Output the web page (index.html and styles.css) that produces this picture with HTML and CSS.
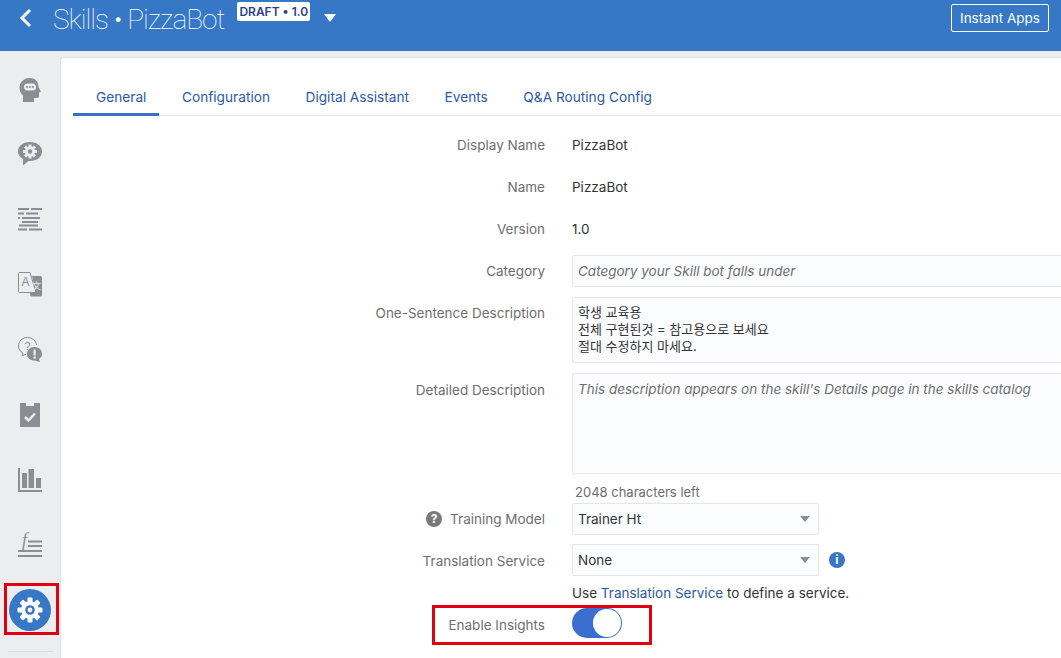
FILE: index.html
```html
<!DOCTYPE html>
<html>
<head>
<meta http-equiv="Content-Type" content="text/html; charset=UTF-8" />
<title>Skills - PizzaBot</title>
<link rel="stylesheet" href="styles.css">
</head>

<body>

<div id="header">
	<svg class="back-icon" width="14" height="20" viewBox="0 0 14 20"><path d="M11 2 L3 10 L11 18" fill="none" stroke="#fff" stroke-width="3"/></svg>
	<div id="title">Skills • PizzaBot</div>
	<div id="badge">DRAFT • 1.0</div>
	<div id="title-caret"></div>
	<button id="instant-apps">Instant Apps</button>
</div>

<div id="content">
	<div id="sidebar">
		<!-- head -->
		<div class="nav-item">
			<svg width="24" height="26" viewBox="0 0 24 26"><path class="ico" d="M12 1 C5.500 1 1.500 5.500 1.500 11 c0 3.500 1.500 5.500 3.500 7.500 V25 H16 v-4 h3 c1.500 0 2-1 2-2 v-3.500 l2-.8 L20.500 10 C20.500 5 17.500 1 12 1z"/><rect x="6" y="6.500" width="12" height="7" rx="3.500" fill="#ebedef"/><circle cx="9" cy="10" r="1" class="ico"/><circle cx="12" cy="10" r="1" class="ico"/><circle cx="15" cy="10" r="1" class="ico"/></svg>
		</div>
		<!-- bubble with gear -->
		<div class="nav-item nav-item-up">
			<svg width="24" height="24" viewBox="0 0 24 24"><path class="ico" d="M12 0 C5 0 0 4 0 9.500 C0 13 2.500 15.500 5 17 V23.500 L10.500 19 C18 19.500 24 15.500 24 9.500 C24 4 19 0 12 0z"/><g transform="translate(12 9.500)" fill="#ebedef"><circle r="5"/><rect x="-1.500" y="-7" width="3" height="14"/><rect x="-1.500" y="-7" width="3" height="14" transform="rotate(45)"/><rect x="-1.500" y="-7" width="3" height="14" transform="rotate(90)"/><rect x="-1.500" y="-7" width="3" height="14" transform="rotate(135)"/><circle r="2.200" class="ico"/></g></svg>
		</div>
		<!-- text lines -->
		<div class="nav-item">
			<svg width="24" height="23" viewBox="0 0 24 23"><g class="ico"><rect x="0" y="0" width="11" height="2"/><rect x="13" y="0" width="11" height="2"/><rect x="0" y="4.500" width="6" height="2"/><rect x="8" y="4.500" width="12" height="2"/><rect x="0" y="9" width="2" height="2"/><rect x="4" y="9" width="18" height="2"/><rect x="4" y="13" width="16" height="2"/><rect x="1" y="16.500" width="19" height="2"/><rect x="0" y="20.500" width="9" height="2"/><rect x="11" y="20.500" width="13" height="2"/></g></svg>
		</div>
		<!-- translate -->
		<div class="nav-item">
			<svg width="24" height="25" viewBox="0 0 24 25"><path d="M1.500 .5 H12 L18 20.500 H1.500 Q.5 20.500 .5 19.500 V1.500 Q.5 .5 1.500 .5z" fill="none" stroke="#8a8d91"/><text x="3.500" y="14" class="ico-letter" font-size="12">A</text><path class="ico" d="M14 4 H22.500 Q24 4 24 5.500 V23 Q24 24.500 22.500 24.500 H14 Q12 24.500 12 22.500 V20.500 H18z"/><text x="14" y="17" class="ico-cjk" font-size="9">文</text></svg>
		</div>
		<!-- question and alert bubbles -->
		<div class="nav-item">
			<svg width="24" height="25" viewBox="0 0 24 25"><path d="M5 16 C2 14.500 .5 12 .5 9 C.5 4 4.500 .5 9.500 .5 C14 .5 18 3.500 18.500 8 M5 16 L4 19 L8.500 17" fill="none" stroke="#8a8d91"/><text x="6.500" y="13" class="ico-letter" font-size="11">?</text><path class="ico" d="M16.500 10 C12 10 9 13 9 17 C9 21 12 23.500 16.500 23.500 L22 25 L21 22 C23 20.500 24 19 24 17 C24 13 21 10 16.500 10z"/><rect x="15.500" y="12.500" width="2.200" height="6" fill="#ebedef"/><rect x="15.500" y="19.500" width="2.200" height="2.200" fill="#ebedef"/></svg>
		</div>
		<!-- clipboard -->
		<div class="nav-item">
			<svg width="20" height="24" viewBox="0 0 20 24"><path class="ico" d="M0 0 H6 V3 H14 V0 H20 V24 H0z"/><path d="M5 14 L8.500 17.500 L15 10.500" fill="none" stroke="#ebedef" stroke-width="2.500"/></svg>
		</div>
		<!-- bars -->
		<div class="nav-item">
			<svg width="24" height="24" viewBox="0 0 24 24"><g class="ico"><rect x="0" y="0" width="2" height="24"/><rect x="0" y="22" width="24" height="2"/><rect x="4" y="5" width="5" height="15"/><rect x="10.500" y="1" width="5.500" height="19"/><rect x="18" y="10" width="5" height="10"/></g></svg>
		</div>
		<!-- function -->
		<div class="nav-item">
			<svg class="f-icon" width="24" height="24" viewBox="0 0 24 24"><text x="4" y="13" class="ico-f" font-size="18">f</text><g class="ico"><rect x="10" y="7.500" width="14" height="2"/><rect x="10" y="12" width="14" height="2"/><rect x="0" y="17" width="24" height="2"/><rect x="0" y="22" width="24" height="2"/></g></svg>
		</div>
		<!-- settings, current page -->
		<div class="nav-item">
			<div id="settings-circle">
				<svg width="26" height="26" viewBox="-13 -13 26 26"><g fill="#fff"><circle r="9"/><rect x="-2.500" y="-12.500" width="5" height="25" rx="1"/><rect x="-2.500" y="-12.500" width="5" height="25" rx="1" transform="rotate(45)"/><rect x="-2.500" y="-12.500" width="5" height="25" rx="1" transform="rotate(90)"/><rect x="-2.500" y="-12.500" width="5" height="25" rx="1" transform="rotate(135)"/></g><circle r="4.800" fill="#3678c5"/><circle r="2.400" fill="#fff"/></svg>
			</div>
			<div id="settings-highlight"></div>
		</div>
		<div id="sidebar-divider"></div>
	</div>

	<div id="panel">
		<div id="tabs">
			<div class="tab tab-active">General</div>
			<div class="tab">Configuration</div>
			<div class="tab">Digital Assistant</div>
			<div class="tab">Events</div>
			<div class="tab">Q&amp;A Routing Config</div>
		</div>

		<div id="form">
			<div class="row">
				<div class="label">Display Name</div>
				<div class="value">PizzaBot</div>
			</div>
			<div class="row">
				<div class="label">Name</div>
				<div class="value">PizzaBot</div>
			</div>
			<div class="row">
				<div class="label">Version</div>
				<div class="value">1.0</div>
			</div>
			<div class="row">
				<div class="label">Category</div>
				<div class="field placeholder">Category your Skill bot falls under</div>
			</div>
			<div class="row">
				<div class="label">One-Sentence Description</div>
				<div class="field area area-short">학생 교육용<br>전체 구현된것 = 참고용으로 보세요<br>절대 수정하지 마세요.</div>
			</div>
			<div class="row">
				<div class="label label-low">Detailed Description</div>
				<div class="field area area-tall placeholder">This description appears on the skill's Details page in the skills catalog</div>
			</div>
			<div class="row row-hint">
				<div class="label"></div>
				<div class="hint">2048 characters left</div>
			</div>
			<div class="row row-select">
				<div class="label">
					<span class="help-icon">?</span>Training Model
				</div>
				<div class="select">Trainer Ht<span class="select-caret"></span></div>
			</div>
			<div class="row row-select-last">
				<div class="label label-low">Translation Service</div>
				<div class="select">None<span class="select-caret"></span></div>
				<span class="info-icon">i</span>
			</div>
			<div class="row row-note">
				<div class="label"></div>
				<div class="note">Use <a href="#">Translation Service</a> to define a service.</div>
			</div>
			<div class="row row-toggle">
				<div class="label">Enable Insights</div>
				<div class="toggle"><span class="toggle-knob"></span></div>
				<div id="insights-highlight"></div>
			</div>
		</div>
	</div>
</div>

</body>
</html>
```

FILE: styles.css
```css
html, body {
	margin: 0;
	height: 658px;
	overflow: hidden;
}

body {
	font-family: Inter, "Noto Sans CJK KR", sans-serif;
	font-size: 13.5px;
	color: #333333;
	background-color: #ebedef;
}

#header {
	height: 51px;
	background-color: #3678c5;
	display: flex;
	align-items: flex-start;
	color: white;
}

.back-icon {
	margin: 8px 0 0 19px;
}

#title {
	margin: 1px 0 0 20px;
	font-family: Roboto, sans-serif;
	font-size: 28px;
	font-weight: 100;
	line-height: 38px;
	letter-spacing: -1px;
}

#badge {
	margin: 2px 0 0 13px;
	height: 19px;
	line-height: 19px;
	padding: 0 2px;
	background-color: white;
	border-radius: 2px;
	color: #2b3f8f;
	font-size: 12px;
	font-weight: 600;
}

#title-caret {
	margin: 14px 0 0 14px;
	border-left: 6px solid transparent;
	border-right: 6px solid transparent;
	border-top: 8px solid white;
}

#instant-apps {
	margin: 4px 12px 0 auto;
	width: 98px;
	height: 28px;
	padding: 0;
	background: none;
	color: white;
	border: 1px solid white;
	border-radius: 2px;
	font-family: inherit;
	font-size: 13.5px;
}

#content {
	display: flex;
}

#sidebar {
	width: 60px;
	flex-shrink: 0;
	padding-top: 6px;
	position: relative;
}

.nav-item {
	height: 65px;
	display: flex;
	align-items: center;
	justify-content: center;
	position: relative;
}

.nav-item-up {
	padding-bottom: 2px;
	box-sizing: border-box;
}

.ico {
	fill: #8a8d91;
}

.ico-letter {
	fill: #8a8d91;
	font-family: "Liberation Sans", sans-serif;
}

.ico-cjk {
	fill: #ebedef;
	font-family: "Noto Sans CJK SC", sans-serif;
}

.ico-f {
	fill: #8a8d91;
	font-family: "Liberation Serif", serif;
	font-style: italic;
}

.f-icon {
	overflow: visible;
}

#settings-circle {
	width: 42px;
	height: 42px;
	border-radius: 50%;
	background-color: #3678c5;
	display: flex;
	align-items: center;
	justify-content: center;
}

#settings-highlight {
	position: absolute;
	left: 4px;
	top: 6px;
	width: 49px;
	height: 46px;
	border: 3px solid #e0000f;
}

#sidebar-divider {
	height: 1px;
	margin: 9px 7px 0 8px;
	background-color: #d8dbdf;
}

#panel {
	flex: 1;
	height: 601px;
	margin-top: 6px;
	background-color: white;
	border-left: 1px solid #dde1e7;
	border-top: 1px solid #dde1e7;
	border-top-left-radius: 3px;
	overflow: hidden;
}

#tabs {
	display: flex;
	gap: 9.5px;
	height: 58px;
	margin-left: 12px;
	border-bottom: 1px solid #e3e6ea;
	box-sizing: border-box;
	padding-top: 22px;
	font-size: 13.7px;
}

.tab {
	padding: 0 13px;
	height: 35px;
	line-height: 34px;
	color: #2a5aa8;
	box-sizing: border-box;
}

.tab-active {
	padding-left: 23px;
	border-bottom: 3px solid #3a70cc;
	height: 36px;
}

#form {
	padding-top: 13px;
	width: 1100px;
}

.row {
	display: flex;
	align-items: flex-start;
	margin-bottom: 10px;
	position: relative;
}

.label {
	width: 484px;
	height: 32px;
	flex-shrink: 0;
	display: flex;
	align-items: center;
	justify-content: flex-end;
	box-sizing: border-box;
	color: #6e6e6e;
}

.label-low {
	padding-top: 2px;
}

.value {
	margin-left: 27px;
	line-height: 32px;
}

.field {
	margin-left: 27px;
	width: 600px;
	height: 32px;
	line-height: 30px;
	padding: 0 5px;
	box-sizing: border-box;
	background-color: #fbfcfe;
	border: 1px solid #e3e6ea;
	border-radius: 2px;
}

.placeholder {
	font-style: italic;
	color: #6e6e6e;
}

.area {
	padding-top: 6px;
	line-height: 17.5px;
}

.area-short {
	height: 66px;
	font-size: 13px;
	line-height: 17px;
}

.area-tall {
	height: 101px;
	padding-top: 7px;
}

.row-hint {
	margin-bottom: 3px;
	height: 16px;
}

.hint {
	margin-left: 30px;
	font-size: 13px;
	line-height: 17px;
	color: #6e6e6e;
}

.row-hint .label,
.row-note .label {
	height: 16px;
}

.row-select {
	margin-bottom: 9px;
}

.row-select-last {
	margin-bottom: 8px;
}

.select {
	margin-left: 27px;
	width: 247px;
	height: 32px;
	line-height: 30px;
	padding: 0 5px;
	box-sizing: border-box;
	background-color: #fbfcfe;
	border: 1px solid #e3e6ea;
	border-radius: 2px;
	display: flex;
	align-items: center;
	justify-content: space-between;
}

.select-caret {
	margin-right: 3px;
	border-left: 5px solid transparent;
	border-right: 5px solid transparent;
	border-top: 6px solid #8a8d91;
}

.help-icon {
	width: 16px;
	height: 16px;
	margin-right: 8px;
	border-radius: 50%;
	background-color: #7a7a7a;
	color: white;
	font-size: 12px;
	font-weight: 700;
	line-height: 16px;
	text-align: center;
}

.info-icon {
	width: 16px;
	height: 16px;
	margin: 8px 0 0 10px;
	border-radius: 50%;
	background-color: #3678c5;
	color: white;
	font-size: 12px;
	font-weight: 700;
	line-height: 16px;
	text-align: center;
}

.row-note {
	margin-bottom: 6px;
	height: 18px;
}

.note {
	margin-left: 27px;
	line-height: 18px;
}

.note a {
	color: #2a5aa8;
	text-decoration: none;
}

.row-toggle {
	align-items: center;
	height: 30px;
}

.row-toggle .label {
	height: 34px;
	padding-top: 4px;
}

.toggle {
	margin-left: 27px;
	width: 50px;
	height: 30px;
	box-sizing: border-box;
	padding: 1px;
	border-radius: 15px;
	background-color: #3a6fcf;
	display: flex;
	justify-content: flex-end;
}

.toggle-knob {
	width: 28px;
	height: 28px;
	border-radius: 50%;
	background-color: white;
}

#insights-highlight {
	position: absolute;
	left: 371px;
	top: -3px;
	width: 214px;
	height: 34px;
	border: 3px solid #e0000f;
}
```
